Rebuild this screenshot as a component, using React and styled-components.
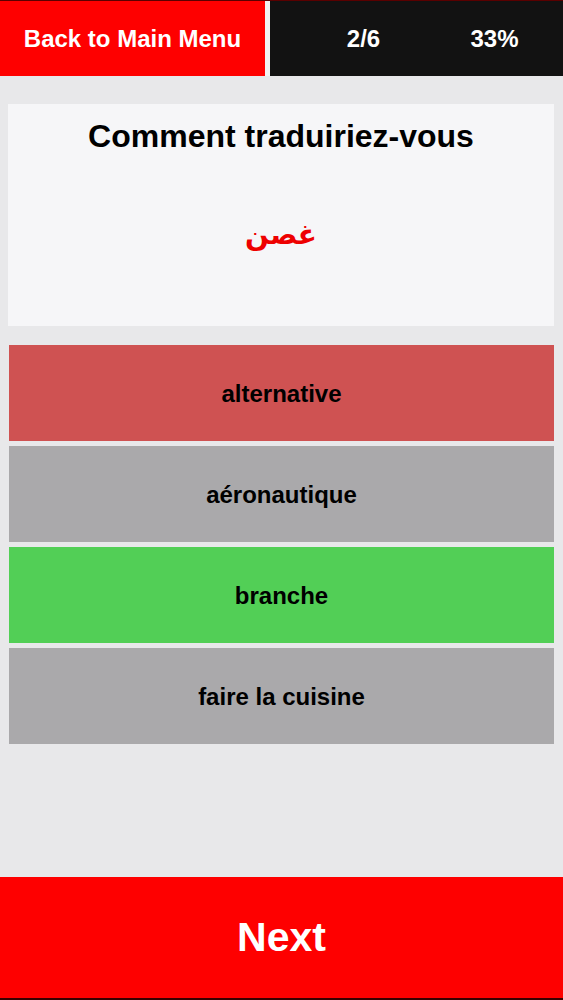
import React from "react";
import styled, { createGlobalStyle } from "styled-components";

const GlobalStyle = createGlobalStyle`
  html, body {
    margin: 0;
    padding: 0;
    background: #e8e8ea;
    font-family: "Liberation Sans", Arial, sans-serif;
  }
`;

const Page = styled.div`
  display: flex;
  flex-direction: column;
  height: 1000px;
  background: #e8e8ea;
`;

const Header = styled.div`
  display: flex;
  gap: 5px;
  height: 76px;
  background: #f2f2f2;
  border-top: 1px solid #5a0000;
  box-sizing: border-box;
`;

const MenuButton = styled.div`
  width: 265px;
  display: flex;
  align-items: center;
  justify-content: center;
  background: #fe0000;
  color: #fff;
  font-size: 24px;
  font-weight: bold;
`;

const Progress = styled.div`
  flex: 1;
  display: flex;
  justify-content: flex-end;
  padding-right: 3px;
  background: #121212;
`;

const Stat = styled.div`
  width: 131px;
  display: flex;
  align-items: center;
  justify-content: center;
  color: #fff;
  font-size: 24px;
  font-weight: bold;
`;

const Content = styled.div`
  flex: 1;
  display: flex;
  flex-direction: column;
  padding: 28px 9px 0 8px;
`;

const QuestionCard = styled.div`
  height: 222px;
  box-sizing: border-box;
  padding-top: 14px;
  background: #f6f6f8;
  text-align: center;
`;

const Prompt = styled.div`
  font-size: 32px;
  font-weight: bold;
  color: #000;
`;

const Word = styled.div`
  margin-top: 66px;
  font-family: "DejaVu Sans", sans-serif;
  font-size: 28px;
  font-weight: bold;
  line-height: 1;
  color: #ee0000;
`;

const Options = styled.div`
  display: flex;
  flex-direction: column;
  gap: 5px;
  margin-top: 19px;
  padding-left: 1px;
`;

const tones = {
  wrong: "#cf5252",
  right: "#52cf56",
  idle: "#aaa9ab",
};

const Option = styled.div`
  height: 96px;
  display: flex;
  align-items: center;
  justify-content: center;
  padding-top: 1px;
  box-sizing: border-box;
  background: ${(p) => tones[p.$state]};
  color: #000;
  font-size: 24px;
  font-weight: bold;
`;

const NextButton = styled.div`
  height: 123px;
  display: flex;
  align-items: center;
  justify-content: center;
  background: #fe0000;
  color: #fff;
  font-size: 41px;
  font-weight: bold;
  border-bottom: 2px solid #3a0000;
  box-sizing: border-box;
`;

const answers = [
  { label: "alternative", state: "wrong" },
  { label: "aéronautique", state: "idle" },
  { label: "branche", state: "right" },
  { label: "faire la cuisine", state: "idle" },
];

export default function App() {
  return (
    <>
      <GlobalStyle />
      <Page>
        <Header>
          <MenuButton>Back to Main Menu</MenuButton>
          <Progress>
            <Stat>2/6</Stat>
            <Stat>33%</Stat>
          </Progress>
        </Header>
        <Content>
          <QuestionCard>
            <Prompt>Comment traduiriez-vous</Prompt>
            <Word lang="ar" dir="rtl">غصن</Word>
          </QuestionCard>
          <Options>
            {answers.map((a) => (
              <Option key={a.label} $state={a.state}>
                {a.label}
              </Option>
            ))}
          </Options>
        </Content>
        <NextButton>Next</NextButton>
      </Page>
    </>
  );
}
